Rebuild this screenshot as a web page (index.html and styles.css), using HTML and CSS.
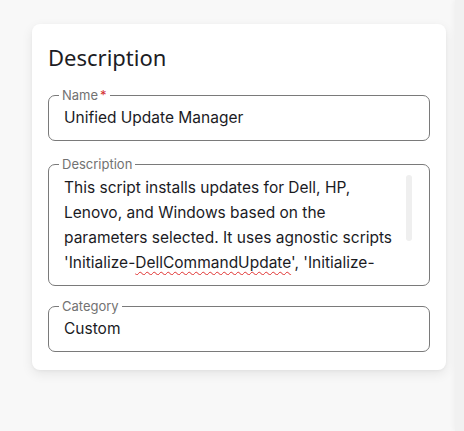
FILE: index.html
```html
<!DOCTYPE html>
<html lang="en">
<head>
  <meta charset="UTF-8">
  <meta name="viewport" content="width=device-width, initial-scale=1.0">
  <title>Script Description</title>
  <link rel="stylesheet" href="styles.css">
</head>
<body>
  <div class="page">
    <main class="content">
      <section class="card">
        <h2 class="card-title">Description</h2>

        <fieldset class="field field-name">
          <legend>Name<span class="required">*</span></legend>
          <div class="field-value">Unified Update Manager</div>
        </fieldset>

        <fieldset class="field field-description">
          <legend>Description</legend>
          <div class="field-text">
            This script installs updates for Dell, HP, Lenovo, and Windows based on the parameters selected. It uses agnostic scripts 'Initialize-<span class="misspelled">DellCommandUpdate</span>', 'Initialize-HPImageAssistant', and 'Initialize-LenovoSystemUpdate' to run the vendor tools.
          </div>
          <div class="scroll-thumb"></div>
        </fieldset>

        <fieldset class="field field-category">
          <legend>Category</legend>
          <div class="field-value">Custom</div>
        </fieldset>
      </section>
    </main>
    <aside class="side-panel"></aside>
  </div>
</body>
</html>
```

FILE: styles.css
```css
* {
  margin: 0;
  padding: 0;
  box-sizing: border-box;
}

body {
  font-family: Inter, 'Noto Sans', sans-serif;
  background: #f8f8f8;
  color: #1b1b1f;
}

.page {
  display: flex;
  min-height: 100vh;
}

.content {
  flex: 1;
  padding: 24px 0 0 32px;
}

.side-panel {
  width: 9px;
  background: #f1f1f1;
  box-shadow: -2px 0 4px rgba(0, 0, 0, 0.03);
}

.card {
  width: 414px;
  background: #ffffff;
  border-radius: 8px;
  padding: 18px 16px 18px;
  box-shadow: 0 4px 12px rgba(0, 0, 0, 0.08), 0 1px 3px rgba(0, 0, 0, 0.04);
}

.card-title {
  font-family: 'Noto Sans', sans-serif;
  font-size: 22px;
  font-weight: 400;
  line-height: 30px;
  color: #1c1c24;
  margin-bottom: 16px;
}

.field {
  border: 1px solid #7a7a7a;
  border-radius: 7px;
  padding: 0 15px;
  min-width: 0;
}

.field legend {
  font-size: 13px;
  line-height: 15px;
  color: #727272;
  padding: 0 3px;
  margin-left: -5px;
}

.required {
  color: #d32f2f;
  margin-left: 2px;
}

.field-value {
  font-size: 15.5px;
  line-height: 20px;
  padding: 5px 0 12px;
}

.field-name {
  margin-bottom: 16px;
}

.field-description {
  position: relative;
  padding-right: 17px;
  margin-bottom: 13px;
}

.field-text {
  font-size: 15.5px;
  line-height: 25px;
  height: 100px;
  margin: 3px 0 10px;
  padding-right: 14px;
  overflow: hidden;
}

/* scrollbar thumb of the text area */
.scroll-thumb {
  position: absolute;
  top: 3px;
  right: 17px;
  width: 6px;
  height: 66px;
  border-radius: 3px;
  background: #efefef;
}

.misspelled {
  text-decoration: underline wavy #e0302f;
  text-decoration-thickness: 1px;
  text-underline-offset: 3px;
}
```
